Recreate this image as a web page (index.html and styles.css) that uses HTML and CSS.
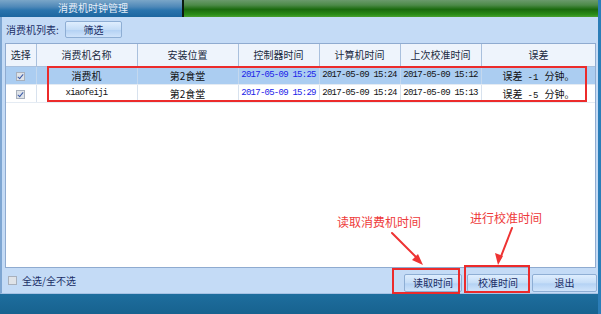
FILE: index.html
```html
<!DOCTYPE html>
<html lang="zh-CN">
<head>
<meta charset="utf-8">
<title>消费机时钟管理</title>
<link rel="stylesheet" href="styles.css">
</head>
<body>
<div class="window">
  <div class="titlebar">
    <div class="tab">消费机时钟管理</div>
    <div class="tab-sep"></div>
    <div class="tab-rest"></div>
  </div>
  <div class="panel">
    <div class="toolbar">
      <span class="label">消费机列表:</span>
      <button class="btn btn-filter">筛选</button>
    </div>
    <div class="grid">
      <table>
        <colgroup>
          <col class="c1"><col class="c2"><col class="c3"><col class="c4"><col class="c5"><col class="c6"><col class="c7">
        </colgroup>
        <thead>
          <tr><th>选择</th><th>消费机名称</th><th>安装位置</th><th>控制器时间</th><th>计算机时间</th><th>上次校准时间</th><th>误差</th></tr>
        </thead>
        <tbody>
          <tr class="sel">
            <td><span class="chk on"></span></td>
            <td>消费机</td>
            <td>第2食堂</td>
            <td class="mono blue">2017-05-09 15:25</td>
            <td class="mono">2017-05-09 15:24</td>
            <td class="mono">2017-05-09 15:12</td>
            <td>误差<span class="mono num">-1</span>分钟。</td>
          </tr>
          <tr>
            <td><span class="chk on"></span></td>
            <td class="mono">xiaofeiji</td>
            <td>第2食堂</td>
            <td class="mono blue">2017-05-09 15:29</td>
            <td class="mono">2017-05-09 15:24</td>
            <td class="mono">2017-05-09 15:13</td>
            <td>误差<span class="mono num">-5</span>分钟。</td>
          </tr>
        </tbody>
      </table>
    </div>
    <div class="footer">
      <label class="selall"><span class="chk"></span>全选/全不选</label>
      <div class="actions">
        <button class="btn btn-read">读取时间</button>
        <button class="btn btn-cal">校准时间</button>
        <button class="btn btn-exit">退出</button>
      </div>
    </div>
  </div>
  <div class="bottombar"></div>

  <div class="mark mark-rows"></div>
  <div class="mark mark-read"></div>
  <div class="mark mark-cal"></div>
  <div class="note note-read">读取消费机时间</div>
  <div class="note note-cal">进行校准时间</div>
  <svg class="arrows" width="601" height="314" viewBox="0 0 601 314">
    <g stroke="#ee3333" stroke-width="2" fill="none" stroke-linecap="round">
      <line x1="392" y1="233" x2="419" y2="260"/>
      <line x1="512" y1="228" x2="500" y2="259"/>
    </g>
    <g fill="#ee3333">
      <polygon points="423,265 412,260 418,254"/>
      <polygon points="498,265 495,253 503,256"/>
    </g>
  </svg>
</div>
</body>
</html>
```

FILE: styles.css
```css
* { box-sizing: border-box; }
html, body { margin: 0; padding: 0; }
body {
  width: 601px;
  height: 314px;
  overflow: hidden;
  font-family: "Noto Sans CJK SC", "DejaVu Sans", sans-serif;
  font-size: 10px;
  color: #1b2850;
  background: #1a6898;
}
.window {
  position: relative;
  width: 601px;
  height: 314px;
  display: flex;
  flex-direction: column;
  border-right: 3px solid #2b7db8;
  background: #1a6898;
}
.titlebar {
  height: 17px;
  display: flex;
  flex: none;
}
.tab {
  width: 182px;
  background: linear-gradient(#7aa6c8 0%, #4f88b8 40%, #2a74ad 60%, #1c66a0 100%);
  color: #e6eef8;
  text-align: center;
  line-height: 16px;
  padding-left: 4px;
}
.tab-sep { width: 2px; background: #0c1a10; }
.tab-rest {
  flex: 1;
  background: linear-gradient(#6a9a6c 0%, #4c8a48 30%, #1a6a0e 55%, #2a8c18 85%, #48a030 100%);
}
.panel {
  flex: 1;
  background: #c4dbf6;
  border-left: 2px solid #7ea6d2;
  border-bottom: 1px solid #a6c2e4;
  display: flex;
  flex-direction: column;
  padding: 0 1px 0 3px;
}
.toolbar {
  height: 26px;
  display: flex;
  align-items: center;
  padding-left: 1px;
  padding-bottom: 1px;
}
.label { width: 59px; color: #1b2e66; }
.btn {
  font-family: "Noto Sans CJK SC", sans-serif;
  font-size: 10px;
  color: #1b2e66;
  height: 18px;
  padding: 0;
  border: 1px solid #8eaed4;
  border-radius: 2px;
  background: linear-gradient(#dfeefe 0%, #c5ddf7 50%, #b4d2f4 55%, #cfe3fa 100%);
  line-height: 16px;
}
.btn-filter { width: 57px; height: 17px; }
.grid {
  height: 225px;
  background: #ffffff;
  border: 1px solid #8fabd0;
  margin-right: 1px;
  overflow: hidden;
}
table {
  border-collapse: collapse;
  table-layout: fixed;
  width: 590px;
}
col.c1 { width: 30px; }
col.c2 { width: 101px; }
col.c3 { width: 101px; }
col.c4 { width: 81px; }
col.c5 { width: 81px; }
col.c6 { width: 81px; }
col.c7 { width: 115px; }
th {
  height: 22px;
  font-weight: normal;
  background: #eef4fc;
  border-right: 1px solid #a9c0dd;
  border-bottom: 1px solid #a9c0dd;
  color: #202a40;
  padding: 0;
}
td {
  height: 18px;
  padding: 0;
  text-align: center;
  white-space: nowrap;
  border-right: 1px solid #d8e2ee;
  border-bottom: 1px solid #e4ebf3;
  color: #111;
  overflow: hidden;
}
tr.sel td { background: #abcdf1; border-right-color: #c4d8ee; }
.mono {
  font-family: "Liberation Mono", monospace;
  font-size: 9px;
  letter-spacing: -0.75px;
}
.num { margin: 0 6px 0 5px; letter-spacing: 0; }
.blue { color: #1a22e8; }
.chk {
  display: inline-block;
  width: 9px;
  height: 9px;
  border: 1px solid #a8b0bc;
  background: #dfe3e8;
  vertical-align: middle;
  position: relative;
}
.chk.on::after {
  content: "";
  position: absolute;
  left: 2px;
  top: 0px;
  width: 2px;
  height: 5px;
  border: solid #3a5aa8;
  border-width: 0 1.5px 1.5px 0;
  transform: rotate(40deg);
}
.footer {
  flex: 1;
  display: flex;
  align-items: center;
  justify-content: space-between;
}
.selall {
  display: flex;
  align-items: center;
  gap: 5px;
  padding-left: 3px;
  color: #1b2e66;
}
.actions { display: flex; align-items: center; gap: 5px; padding-top: 4px; }
.btn-read { width: 58px; }
.btn-cal { width: 62px; }
.btn-exit { width: 65px; margin-left: -2px; }
.bottombar {
  height: 20px;
  flex: none;
  background: linear-gradient(#1e6e9e, #17628f);
}
.mark {
  position: absolute;
  border: 2px solid #ec2b2b;
}
.mark-rows { left: 47px; top: 66px; width: 540px; height: 36px; }
.mark-read { left: 392px; top: 268px; width: 68px; height: 26px; }
.mark-cal { left: 464px; top: 265px; width: 66px; height: 28px; }
.note {
  position: absolute;
  color: #ee3a3a;
  font-size: 12px;
  line-height: 14px;
}
.note-read { left: 337px; top: 215px; }
.note-cal { left: 470px; top: 211px; }
.arrows { position: absolute; left: 0; top: 0; pointer-events: none; }
```
